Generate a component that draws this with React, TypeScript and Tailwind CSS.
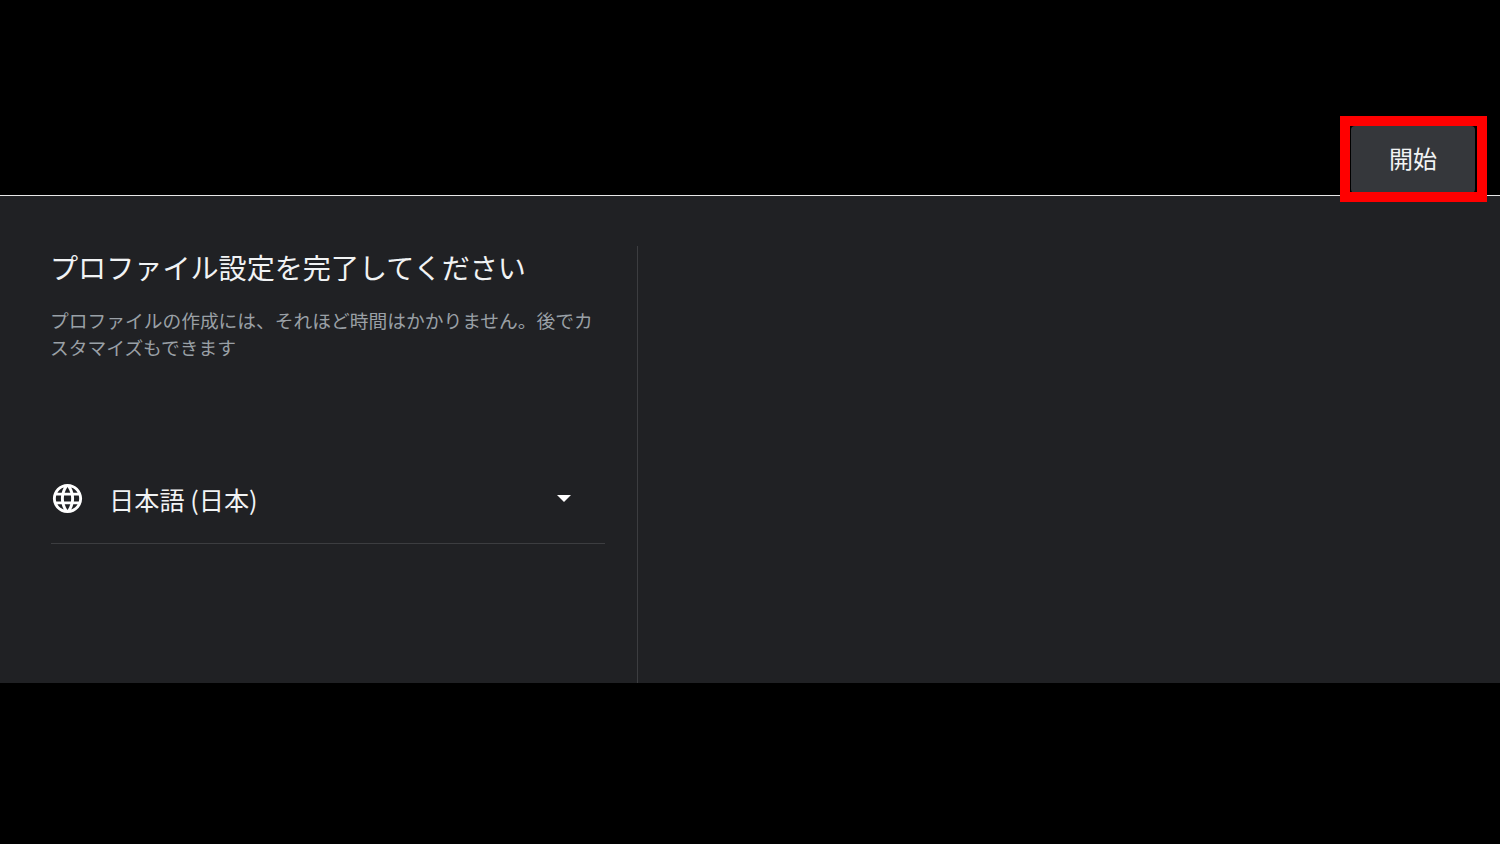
export default function App() {
  const font = { fontFamily: '"Noto Sans CJK JP", "Roboto", sans-serif' };
  return (
    <div className="w-[1500px] h-[844px] bg-black flex flex-col overflow-hidden relative" style={font}>
      <header className="h-[196px] shrink-0 border-b border-[#e8e8e8] flex justify-end items-start pt-[126px] pr-[25px]">
        <button className="w-[124px] h-[67px] pb-[3px] bg-[#35373b] rounded-[4px] text-[#f1f3f4] text-[24px] leading-[36px] text-center">開始</button>
      </header>
      <main className="h-[487px] shrink-0 bg-[#202124] flex pt-[50px]">
        <section className="w-[638px] shrink-0 border-r border-[#3c3d40] pl-[50px] pr-[31px] flex flex-col">
          <h1 className="text-[28.1px] leading-[44px] -mt-[1px] text-[#f1f3f4] font-normal whitespace-nowrap">プロファイル設定を完了してください</h1>
          <p className="mt-[18px] w-[556px] text-[18.74px] leading-[26.5px] text-[#9aa0a6]">プロファイルの作成には、それほど時間はかかりません。後でカスタマイズもできます</p>
          <div className="mt-[110px] ml-[1px] w-[554px] h-[74px] border-b border-[#3c3d40] flex items-start">
            <svg className="mt-[11px] -ml-[1px] shrink-0" width="35" height="35" viewBox="0 0 24 24" fill="#fff">
              <path d="M11.99 2C6.47 2 2 6.48 2 12s4.47 10 9.99 10C17.52 22 22 17.52 22 12S17.52 2 11.99 2zm6.93 6h-2.95c-.32-1.25-.78-2.45-1.38-3.56 1.84.63 3.37 1.91 4.33 3.56zM12 4.04c.83 1.2 1.48 2.53 1.91 3.96h-3.82c.43-1.43 1.08-2.76 1.91-3.96zM4.26 14C4.1 13.36 4 12.69 4 12s.1-1.36.26-2h3.38c-.08.66-.14 1.32-.14 2s.06 1.34.14 2H4.26zm.82 2h2.95c.32 1.25.78 2.45 1.38 3.56-1.84-.63-3.37-1.9-4.33-3.56zm2.95-8H5.08c.96-1.66 2.49-2.93 4.33-3.56C8.81 5.55 8.35 6.75 8.03 8zM12 19.96c-.83-1.2-1.48-2.53-1.91-3.96h3.82c-.43 1.43-1.08 2.76-1.91 3.96zM14.34 14H9.66c-.09-.66-.16-1.32-.16-2s.07-1.35.16-2h4.68c.09.65.16 1.32.16 2s-.07 1.34-.16 2zm.25 5.56c.6-1.11 1.06-2.31 1.38-3.56h2.95c-.96 1.65-2.49 2.93-4.33 3.56zM16.36 14c.08-.66.14-1.32.14-2s-.06-1.34-.14-2h3.38c.16.64.26 1.31.26 2s-.1 1.36-.26 2h-3.38z" />
            </svg>
            <span className="ml-[24px] mt-[9px] text-[25.2px] leading-[40px] text-[#f1f3f4] whitespace-nowrap">日本語 (日本)</span>
            <svg className="ml-auto mr-[34px] mt-[25px] shrink-0" width="14" height="7" viewBox="0 0 14 7" fill="#fff">
              <path d="M0 0h14L7 7z" />
            </svg>
          </div>
        </section>
        <section className="flex-1" />
      </main>
      <div className="absolute left-[1340px] top-[116px] w-[147px] h-[86px] border-[10px] border-[#ff0000] pointer-events-none" />
    </div>
  );
}
